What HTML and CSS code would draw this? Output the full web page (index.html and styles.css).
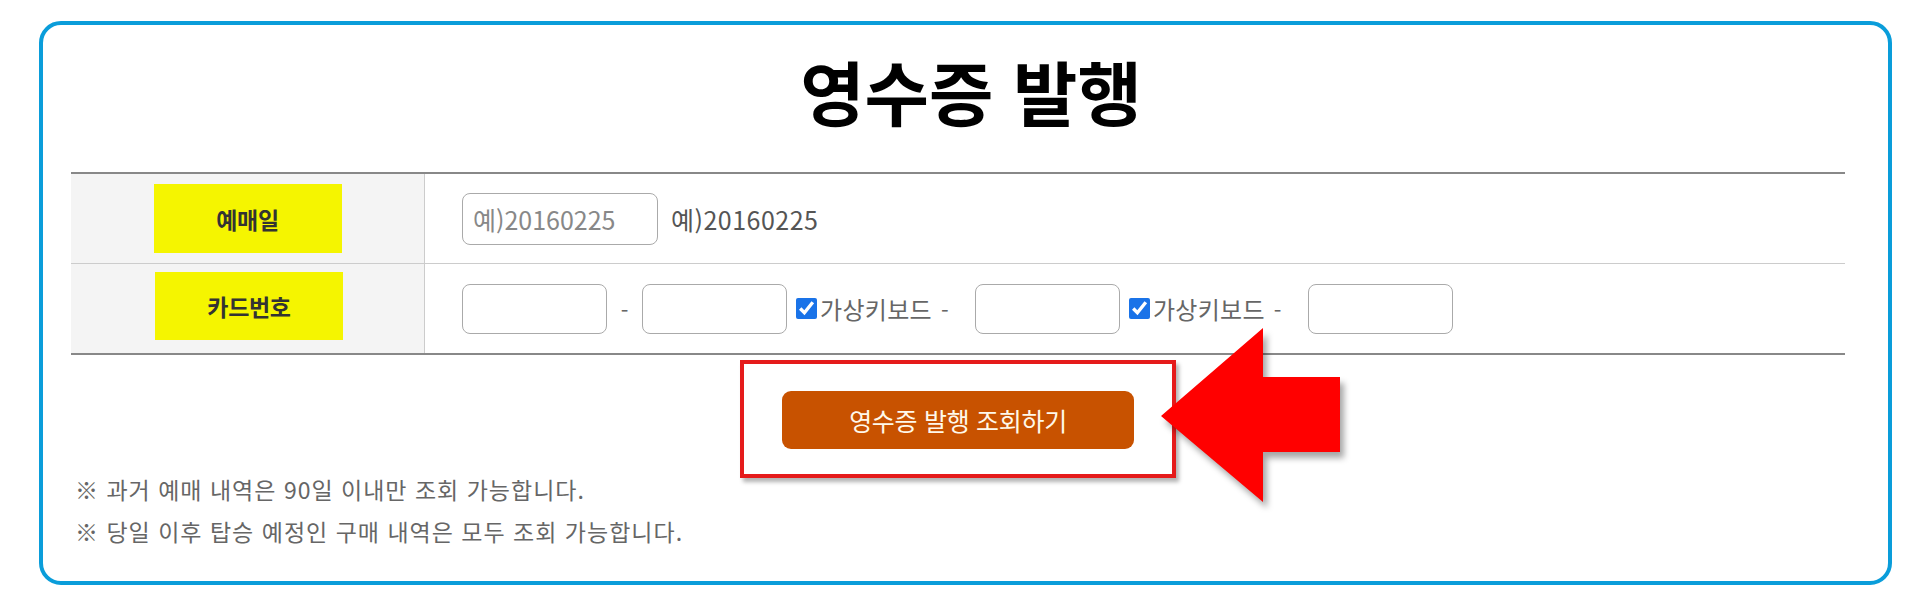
FILE: index.html
```html
<!DOCTYPE html>
<html lang="ko">
<head>
<meta charset="utf-8">
<title>영수증 발행</title>
<link rel="stylesheet" href="styles.css">
</head>
<body>
<div class="frame">
  <h1 class="title">영수증 발행</h1>
  <div class="form">
    <div class="row row-first">
      <div class="th"><span class="tag">예매일</span></div>
      <div class="td">
        <input class="field field-date" type="text" placeholder="예)20160225">
        <span class="hint">예)20160225</span>
      </div>
    </div>
    <div class="row">
      <div class="th"><span class="tag tag-2">카드번호</span></div>
      <div class="td">
        <input class="field field-card" type="text">
        <span class="sep">-</span>
        <input class="field field-card" type="text">
        <label class="vk"><input class="chk" type="checkbox" checked><span>가상키보드</span></label>
        <span class="sep sep-wide">-</span>
        <input class="field field-card" type="text">
        <label class="vk"><input class="chk" type="checkbox" checked><span>가상키보드</span></label>
        <span class="sep sep-wide">-</span>
        <input class="field field-card" type="text">
      </div>
    </div>
  </div>
  <div class="action">
    <div class="callout">
      <button class="btn" type="button">영수증 발행 조회하기</button>
    </div>
  </div>
  <div class="notes">
    <p>※ 과거 예매 내역은 90일 이내만 조회 가능합니다.</p>
    <p>※ 당일 이후 탑승 예정인 구매 내역은 모두 조회 가능합니다.</p>
  </div>
  <svg class="arrow" width="200" height="200" viewBox="0 0 200 200">
    <polygon points="6,94 108,6 108,55 185,55 185,130 108,130 108,180" fill="#ff0000"/>
  </svg>
</div>
</body>
</html>
```

FILE: styles.css
```css
* { box-sizing: border-box; }

html, body {
  margin: 0;
  padding: 0;
  background: #ffffff;
}

body {
  font-family: "Noto Sans CJK KR", "Noto Sans", sans-serif;
  color: #555;
}

.frame {
  position: relative;
  margin: 21px 0 0 39px;
  width: 1853px;
  height: 564px;
  border: 4px solid #0a9dda;
  border-radius: 22px;
  padding-left: 28px;
}

.title {
  margin: 0;
  width: 1774px;
  padding-left: 26px;
  text-align: center;
  font-size: 70px;
  font-weight: 700;
  line-height: 131px;
  color: #000;
}

.form {
  margin-top: 16px;
  width: 1774px;
  border-top: 2px solid #888;
  border-bottom: 2px solid #888;
}

.row {
  display: grid;
  grid-template-columns: 354px 1fr;
  height: 89px;
}

.row-first {
  height: 90px;
  border-bottom: 1px solid #ccc;
}

.th {
  background: #f4f4f4;
  border-right: 1px solid #ccc;
  display: flex;
  align-items: center;
  justify-content: center;
}

.tag {
  display: flex;
  align-items: center;
  justify-content: center;
  width: 188px;
  height: 69px;
  background: #f5f500;
  color: #333;
  font-size: 23px;
  font-weight: 700;
  letter-spacing: -0.3px;
}

.tag-2 {
  height: 68px;
  margin-left: 3px;
  margin-bottom: 5px;
}

.td {
  display: flex;
  align-items: center;
  padding-left: 37px;
}

.field {
  border: 1px solid #aaa;
  border-radius: 8px;
  background: #fff;
  font-family: inherit;
  font-size: 25px;
  color: #555;
  padding: 0 10px;
  outline: none;
}

.field::placeholder {
  color: #888;
}

.field-date {
  width: 196px;
  height: 52px;
}

.hint {
  margin-left: 13px;
  font-size: 25px;
  letter-spacing: 0.5px;
  color: #555;
}

.field-card {
  width: 145px;
  height: 50px;
}

.sep {
  width: 35px;
  text-align: center;
  font-size: 22px;
  color: #666;
}

.sep-wide {
  width: 43px;
  text-align: left;
  padding-left: 9px;
}

.vk {
  display: flex;
  align-items: center;
  margin-left: 9px;
  font-size: 24px;
  letter-spacing: 0.3px;
  color: #666;
}

.chk {
  width: 21px;
  height: 21px;
  margin: 0 3px 0 0;
  accent-color: #1a73e8;
}

.action {
  width: 1774px;
  display: flex;
  justify-content: center;
  padding-top: 5px;
}

.callout {
  border: 4px solid #e51b1b;
  padding: 27px 38px 25px;
  box-shadow: 3px 4px 4px rgba(0, 0, 0, 0.3);
}

.btn {
  display: block;
  width: 352px;
  height: 58px;
  border: none;
  border-radius: 9px;
  background: #c85200;
  color: #fff8ea;
  font-family: inherit;
  font-size: 25px;
  letter-spacing: -0.3px;
  cursor: pointer;
}

.notes {
  margin-top: -10px;
  padding-left: 4px;
  font-size: 23px;
  line-height: 42px;
  color: #666;
  letter-spacing: 1px;
}

.notes p {
  margin: 0;
}

.arrow {
  position: absolute;
  left: 1112px;
  top: 297px;
  filter: drop-shadow(4px 6px 3px rgba(0, 0, 0, 0.35));
}
```
